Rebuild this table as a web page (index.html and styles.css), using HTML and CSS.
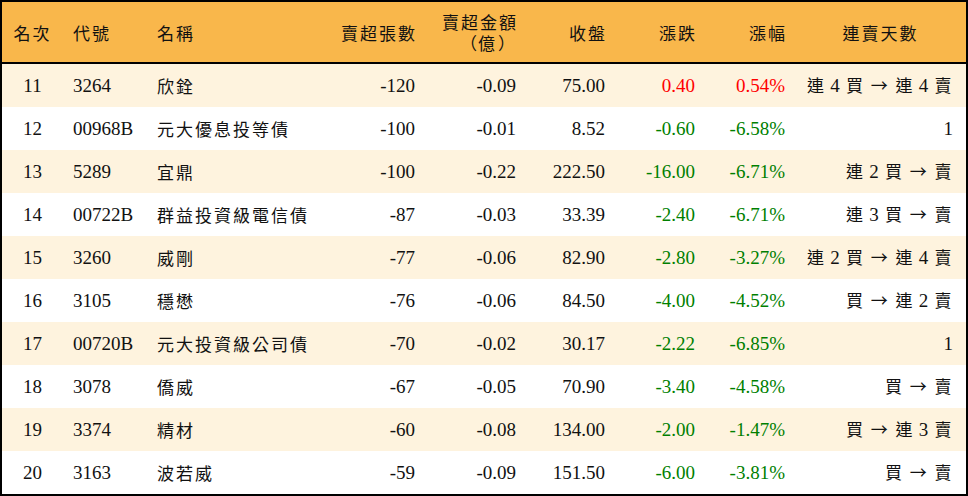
FILE: index.html
```html
<!DOCTYPE html>
<html lang="zh-Hant">
<head>
<meta charset="utf-8">
<title>賣超排行</title>
<link rel="stylesheet" href="styles.css">
</head>
<body>
<table class="rank">
  <colgroup>
    <col class="c1"><col class="c2"><col class="c3"><col class="c4"><col class="c5"><col class="c6"><col class="c7"><col class="c8"><col class="c9">
  </colgroup>
  <thead>
    <tr>
      <th class="ctr">名次</th>
      <th class="lft">代號</th>
      <th class="lft">名稱</th>
      <th class="rgt">賣超張數</th>
      <th class="rgt">賣超金額<br><span class="po">（</span>億<span class="pc">）</span></th>
      <th class="rgt">收盤</th>
      <th class="rgt">漲跌</th>
      <th class="rgt">漲幅</th>
      <th class="ctr">連賣天數</th>
    </tr>
  </thead>
  <tbody>
    <tr class="alt"><td class="ctr">11</td><td class="lft">3264</td><td class="lft nm">欣銓</td><td class="rgt">-120</td><td class="rgt">-0.09</td><td class="rgt">75.00</td><td class="rgt up">0.40</td><td class="rgt up">0.54%</td><td class="rgt last"><span class="k">連</span> 4 <span class="k">買</span> <span class="k">→</span> <span class="k">連</span> 4 <span class="k">賣</span></td></tr>
    <tr><td class="ctr">12</td><td class="lft">00968B</td><td class="lft nm">元大優息投等債</td><td class="rgt">-100</td><td class="rgt">-0.01</td><td class="rgt">8.52</td><td class="rgt dn">-0.60</td><td class="rgt dn">-6.58%</td><td class="rgt last">1</td></tr>
    <tr class="alt"><td class="ctr">13</td><td class="lft">5289</td><td class="lft nm">宜鼎</td><td class="rgt">-100</td><td class="rgt">-0.22</td><td class="rgt">222.50</td><td class="rgt dn">-16.00</td><td class="rgt dn">-6.71%</td><td class="rgt last"><span class="k">連</span> 2 <span class="k">買</span> <span class="k">→</span> <span class="k">賣</span></td></tr>
    <tr><td class="ctr">14</td><td class="lft">00722B</td><td class="lft nm">群益投資級電信債</td><td class="rgt">-87</td><td class="rgt">-0.03</td><td class="rgt">33.39</td><td class="rgt dn">-2.40</td><td class="rgt dn">-6.71%</td><td class="rgt last"><span class="k">連</span> 3 <span class="k">買</span> <span class="k">→</span> <span class="k">賣</span></td></tr>
    <tr class="alt"><td class="ctr">15</td><td class="lft">3260</td><td class="lft nm">威剛</td><td class="rgt">-77</td><td class="rgt">-0.06</td><td class="rgt">82.90</td><td class="rgt dn">-2.80</td><td class="rgt dn">-3.27%</td><td class="rgt last"><span class="k">連</span> 2 <span class="k">買</span> <span class="k">→</span> <span class="k">連</span> 4 <span class="k">賣</span></td></tr>
    <tr><td class="ctr">16</td><td class="lft">3105</td><td class="lft nm">穩懋</td><td class="rgt">-76</td><td class="rgt">-0.06</td><td class="rgt">84.50</td><td class="rgt dn">-4.00</td><td class="rgt dn">-4.52%</td><td class="rgt last"><span class="k">買</span> <span class="k">→</span> <span class="k">連</span> 2 <span class="k">賣</span></td></tr>
    <tr class="alt"><td class="ctr">17</td><td class="lft">00720B</td><td class="lft nm">元大投資級公司債</td><td class="rgt">-70</td><td class="rgt">-0.02</td><td class="rgt">30.17</td><td class="rgt dn">-2.22</td><td class="rgt dn">-6.85%</td><td class="rgt last">1</td></tr>
    <tr><td class="ctr">18</td><td class="lft">3078</td><td class="lft nm">僑威</td><td class="rgt">-67</td><td class="rgt">-0.05</td><td class="rgt">70.90</td><td class="rgt dn">-3.40</td><td class="rgt dn">-4.58%</td><td class="rgt last"><span class="k">買</span> <span class="k">→</span> <span class="k">賣</span></td></tr>
    <tr class="alt"><td class="ctr">19</td><td class="lft">3374</td><td class="lft nm">精材</td><td class="rgt">-60</td><td class="rgt">-0.08</td><td class="rgt">134.00</td><td class="rgt dn">-2.00</td><td class="rgt dn">-1.47%</td><td class="rgt last"><span class="k">買</span> <span class="k">→</span> <span class="k">連</span> 3 <span class="k">賣</span></td></tr>
    <tr><td class="ctr">20</td><td class="lft">3163</td><td class="lft nm">波若威</td><td class="rgt">-59</td><td class="rgt">-0.09</td><td class="rgt">151.50</td><td class="rgt dn">-6.00</td><td class="rgt dn">-3.81%</td><td class="rgt last"><span class="k">買</span> <span class="k">→</span> <span class="k">賣</span></td></tr>
  </tbody>
</table>
</body>
</html>
```
FILE: styles.css
```css
html, body {
  margin: 0;
  padding: 0;
  background: #ffffff;
}

.rank {
  width: 968px;
  border-collapse: separate;
  border-spacing: 0;
  table-layout: fixed;
  border: 2px solid #000;
  font-family: "Liberation Serif", "Noto Sans CJK TC", serif;
  font-size: 19px;
  color: #111;
}

.c1 { width: 61px; }
.c2 { width: 84px; }
.c3 { width: 173px; }
.c4 { width: 105px; }
.c5 { width: 101px; }
.c6 { width: 89px; }
.c7 { width: 90px; }
.c8 { width: 90px; }
.c9 { width: 171px; }

.rank thead tr {
  background: #f9b74b;
}

.rank th {
  height: 60px;
  box-sizing: content-box;
  border-bottom: 2px solid #000;
  font-weight: normal;
  line-height: 21px;
  padding: 0 10px;
  vertical-align: middle;
  font-family: "Noto Sans CJK TC", sans-serif;
  font-size: 17px;
  letter-spacing: 2px;
}

.rank th .po,
.rank th .pc {
  display: inline-block;
  width: 19px;
  letter-spacing: 0;
  text-align: center;
}

.rank th .pc { margin-right: 2px; }

.rank tbody tr.alt {
  background: #fef3de;
}

.rank td {
  height: 43px;
  box-sizing: border-box;
  padding: 0 10px;
  vertical-align: middle;
  white-space: nowrap;
  line-height: 22px;
}

.rank td.nm,
.rank .k {
  font-family: "Noto Sans CJK TC", sans-serif;
  font-size: 17px;
  letter-spacing: 2px;
}

.rank .k {
  letter-spacing: 0;
  margin: 0 1.5px;
}

.rank td.last {
  padding-right: 13px;
}

.ctr { text-align: center; }
.lft { text-align: left; }
.rgt { text-align: right; }

.rank th.rgt { padding-right: 8px; }

.up { color: #ff0000; }
.dn { color: #007f00; }
```
